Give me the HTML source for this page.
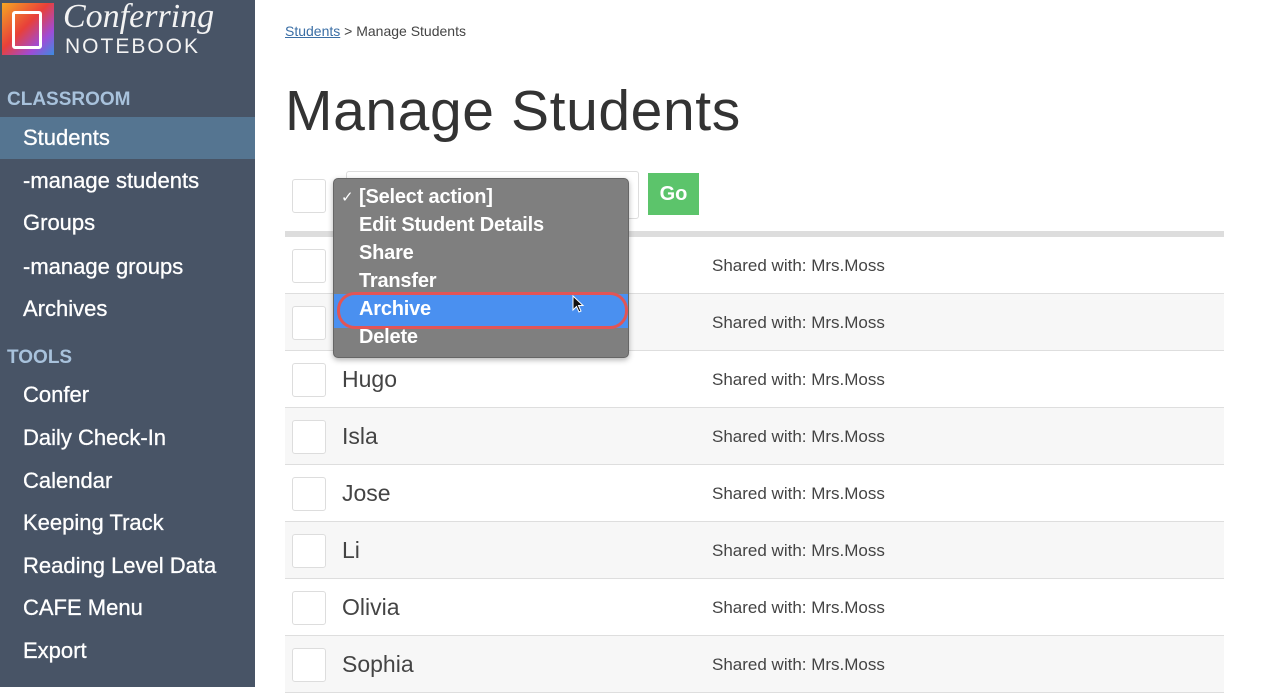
<!DOCTYPE html>
<html><head><style>
*{margin:0;padding:0;box-sizing:border-box}
body{width:1276px;height:687px;overflow:hidden;background:#fff;font-family:"Liberation Sans",Arial,sans-serif;position:relative}
#sb{position:absolute;left:0;top:0;width:255px;height:687px;background:#485466}
.sec{position:absolute;left:7px;color:#a8c2dc;font-size:19px;font-weight:bold}
.it{position:absolute;left:0;width:255px;padding-left:23px;color:#fff;font-size:22px;height:42px;line-height:42px;-webkit-text-stroke:0.3px #fff}
.act{background:#557591}
.row{position:absolute;left:285px;width:939px;height:57px;border-bottom:1px solid #dedede}
.row.g{background:#f7f7f7}
.cb{position:absolute;left:7px;top:12px;width:34px;height:34px;border:1px solid #ddd;border-radius:3px;background:#fff}
.nm{position:absolute;left:57px;top:15px;font-size:23px;color:#444}
.sh{position:absolute;left:427px;top:19px;font-size:17px;color:#444}
#menu{position:absolute;left:333px;top:178px;width:296px;height:180px;background:#7f7f7f;border-radius:5px;border:1px solid #666;box-shadow:0 2px 6px rgba(0,0,0,.3)}
.mi{position:absolute;left:25px;color:#fff;font-size:20px;font-weight:bold;letter-spacing:-0.2px}
</style></head><body>
<div id="sb">
 <div style="position:absolute;left:2px;top:3px;width:52px;height:52px;background:linear-gradient(135deg,#f5a623,#e8403a 45%,#a04bd6 75%,#3b8de0);"></div>
 <div style="position:absolute;left:12px;top:11px;width:30px;height:38px;border:3px solid #fff;border-radius:3px"></div>
 <div style="position:absolute;left:63px;top:-2px;color:#f3f3f3;font-size:34px;font-family:'Liberation Serif',serif;font-style:italic">Conferring</div>
 <div style="position:absolute;left:65px;top:35px;color:#f3f3f3;font-size:21px;letter-spacing:2px">NOTEBOOK</div>
 <div class="sec" style="top:89px">CLASSROOM</div>
 <div class="it act" style="top:117px">Students</div>
 <div class="it" style="top:160px">-manage students</div>
 <div class="it" style="top:202px">Groups</div>
 <div class="it" style="top:246px">-manage groups</div>
 <div class="it" style="top:288px">Archives</div>
 <div class="sec" style="top:347px">TOOLS</div>
 <div class="it" style="top:374px">Confer</div>
 <div class="it" style="top:417px">Daily Check-In</div>
 <div class="it" style="top:460px">Calendar</div>
 <div class="it" style="top:502px">Keeping Track</div>
 <div class="it" style="top:545px">Reading Level Data</div>
 <div class="it" style="top:587px">CAFE Menu</div>
 <div class="it" style="top:630px">Export</div>
</div>
<div style="position:absolute;left:285px;top:23px;font-size:14px;color:#444"><span style="color:#3a6ea5;text-decoration:underline">Students</span> &gt; Manage Students</div>
<div style="position:absolute;left:285px;top:78px;font-size:57px;color:#333;letter-spacing:0.6px">Manage Students</div>
<div style="position:absolute;left:292px;top:179px;width:34px;height:34px;border:1px solid #ddd;border-radius:3px"></div>
<div style="position:absolute;left:346px;top:171px;width:293px;height:48px;border:1px solid #ddd;border-radius:3px"></div>
<div style="position:absolute;left:648px;top:173px;width:51px;height:42px;background:#5cc46b;color:#fff;font-weight:bold;font-size:20px;text-align:center;line-height:42px">Go</div>
<div style="position:absolute;left:285px;top:231px;width:939px;height:6px;background:#ddd"></div>
<div class="row" style="top:237px"><div class="cb"></div><div class="sh">Shared with: Mrs.Moss</div></div>
<div class="row g" style="top:294px"><div class="cb"></div><div class="sh">Shared with: Mrs.Moss</div></div>
<div class="row" style="top:351px"><div class="cb"></div><div class="nm">Hugo</div><div class="sh">Shared with: Mrs.Moss</div></div>
<div class="row g" style="top:408px"><div class="cb"></div><div class="nm">Isla</div><div class="sh">Shared with: Mrs.Moss</div></div>
<div class="row" style="top:465px"><div class="cb"></div><div class="nm">Jose</div><div class="sh">Shared with: Mrs.Moss</div></div>
<div class="row g" style="top:522px"><div class="cb"></div><div class="nm">Li</div><div class="sh">Shared with: Mrs.Moss</div></div>
<div class="row" style="top:579px"><div class="cb"></div><div class="nm">Olivia</div><div class="sh">Shared with: Mrs.Moss</div></div>
<div class="row g" style="top:636px"><div class="cb"></div><div class="nm">Sophia</div><div class="sh">Shared with: Mrs.Moss</div></div>
<div id="menu">
 <div style="position:absolute;left:7px;top:9px;color:#fff;font-size:15px">✓</div>
 <div class="mi" style="top:7px">[Select action]</div>
 <div class="mi" style="top:35px">Edit Student Details</div>
 <div class="mi" style="top:63px">Share</div>
 <div class="mi" style="top:91px">Transfer</div>
 <div style="position:absolute;left:0;top:115px;width:294px;height:34px;background:#4a90f0"></div>
 <div style="position:absolute;left:3px;top:113px;width:291px;height:37px;border:3px solid #e25555;border-radius:18px"></div>
 <div class="mi" style="top:119px">Archive</div>
 <div class="mi" style="top:147px">Delete</div>
 <svg style="position:absolute;left:238px;top:116px" width="14" height="20" viewBox="0 0 14 20"><path d="M1 1 L1 15 L4.5 11.5 L7 17 L9 16 L6.5 10.5 L11 10.5 Z" fill="#111" stroke="#fff" stroke-width="1"/></svg>
</div>
</body></html>
